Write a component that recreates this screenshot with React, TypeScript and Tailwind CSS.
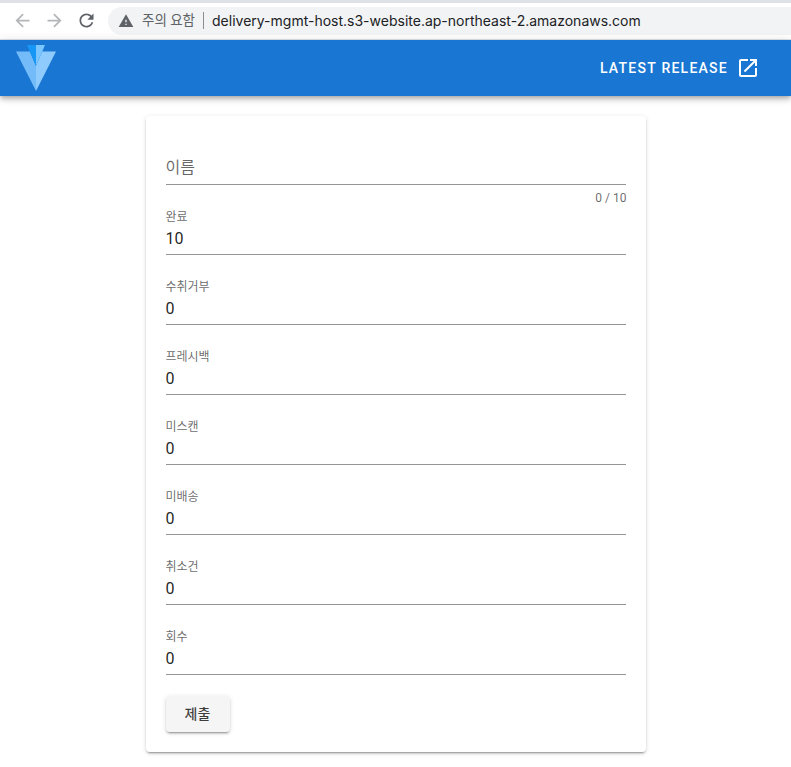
const fields = [
  { label: '완료', value: '10' },
  { label: '수취거부', value: '0' },
  { label: '프레시백', value: '0' },
  { label: '미스캔', value: '0' },
  { label: '미배송', value: '0' },
  { label: '취소건', value: '0' },
  { label: '회수', value: '0' },
];

function BrowserBar() {
  return (
    <div className="bg-white">
      <div className="h-[3px] bg-[#dee1e6]" />
      <div className="flex h-[37px] items-center border-b border-[#dfe3e8] pb-[1px]">
        <svg viewBox="0 0 24 24" className="ml-[12px] h-[21px] w-[21px] fill-[#b4b6b9]">
          <path d="M20 11H7.83l5.59-5.59L12 4l-8 8 8 8 1.41-1.41L7.83 13H20v-2z" />
        </svg>
        <svg viewBox="0 0 24 24" className="ml-[11px] h-[21px] w-[21px] fill-[#b4b6b9]">
          <path d="M4 11h12.17l-5.59-5.59L12 4l8 8-8 8-1.41-1.41L16.17 13H4v-2z" />
        </svg>
        <svg viewBox="0 0 24 24" className="ml-[11px] h-[21px] w-[21px] fill-[#5f6368]">
          <path d="M17.65 6.35C16.2 4.9 14.21 4 12 4c-4.42 0-7.99 3.58-7.99 8s3.57 8 7.99 8c3.73 0 6.84-2.55 7.73-6h-2.08c-.82 2.33-3.04 4-5.65 4-3.31 0-6-2.69-6-6s2.69-6 6-6c1.66 0 3.14.69 4.22 1.78L13 11h7V4l-2.35 2.35z" />
        </svg>
        <div className="ml-[11px] flex h-[28px] flex-1 items-center rounded-l-[14px] bg-[#f1f3f4] pl-[10px]">
          <svg viewBox="0 0 24 24" className="h-[16px] w-[16px] fill-[#5f6368]">
            <path d="M1 21h22L12 2 1 21zm12-3h-2v-2h2v2zm0-4h-2v-4h2v4z" />
          </svg>
          <span className="ml-[8px] text-[13.5px] text-[#5f6368]">주의 요함</span>
          <span className="ml-[8px] h-[17px] w-px bg-[#8a8d91]" />
          <span className="ml-[8px] text-[14px] text-[#202124] [font-family:Inter,sans-serif]">
            delivery-mgmt-host.s3-website.ap-northeast-2.amazonaws.com
          </span>
        </div>
      </div>
    </div>
  );
}

function Logo() {
  return (
    <svg viewBox="0 0 40 46" className="h-[46px] w-[40px]">
      <path d="M0 6.5h13.8L20 21v25z" fill="#74bbf9" />
      <path d="M40 6.5H26.2L20 21v25z" fill="#90cbfd" />
      <path d="M11 0h9v21z" fill="#1697f6" />
      <path d="M29 0h-9v21z" fill="#7bc6ff" />
    </svg>
  );
}

function AppBar() {
  return (
    <header className="relative z-10 flex h-[56px] items-center justify-between bg-[#1976d2] pl-[16px] pr-[31px] shadow-[0_2px_4px_-1px_rgba(0,0,0,0.2),0_4px_5px_0_rgba(0,0,0,0.14),0_1px_10px_0_rgba(0,0,0,0.12)]">
      <Logo />
      <div className="flex items-center text-white">
        <span className="pt-[1px] text-[14px] font-medium uppercase tracking-[1.25px]">Latest Release</span>
        <svg viewBox="0 0 24 24" className="ml-[8px] h-[24px] w-[24px] fill-white">
          <path d="M19 19H5V5h7V3H5c-1.11 0-2 .9-2 2v14c0 1.1.89 2 2 2h14c1.1 0 2-.9 2-2v-7h-2v7zM14 3v2h3.59l-9.83 9.83 1.41 1.41L19 6.41V10h2V3h-7z" />
        </svg>
      </div>
    </header>
  );
}

function Field({ label, value }: { label: string; value: string }) {
  return (
    <div className="pb-[22px]">
      <div className="h-[48px] border-b border-[#949494]">
        <div className="pt-[3px] text-[12px] leading-[14px] text-[#00000099]">{label}</div>
        <div className="mt-[5px] text-[16px] leading-[20px] text-[#000000de]">{value}</div>
      </div>
    </div>
  );
}

export default function App() {
  return (
    <div className="min-h-[767px] bg-white [font-family:Roboto,'Noto_Sans_CJK_KR',sans-serif]">
      <BrowserBar />
      <AppBar />
      <main className="flex justify-center pt-[20px]">
        <form className="w-[500px] rounded bg-white px-[20px] pb-[20px] pt-[21px] shadow-[0_3px_1px_-2px_rgba(0,0,0,0.2),0_2px_2px_0_rgba(0,0,0,0.14),0_1px_5px_0_rgba(0,0,0,0.12)]">
          <div className="flex h-[48px] items-end border-b border-[#949494] pb-[6px] text-[16px] leading-[20px] text-[#00000099]">
            이름
          </div>
          <div className="-mr-[1px] h-[22px] pt-[6px] text-right text-[12px] leading-[14px] text-[#00000099]">0 / 10</div>
          {fields.map(f => (
            <Field key={f.label} label={f.label} value={f.value} />
          ))}
          <button
            type="button"
            className="-mt-[1px] block h-[36px] w-[64px] rounded bg-[#f5f5f5] text-[14px] font-medium text-[#000000c0] shadow-[0_3px_1px_-2px_rgba(0,0,0,0.2),0_2px_2px_0_rgba(0,0,0,0.14),0_1px_5px_0_rgba(0,0,0,0.12)]"
          >
            제출
          </button>
        </form>
      </main>
    </div>
  );
}
